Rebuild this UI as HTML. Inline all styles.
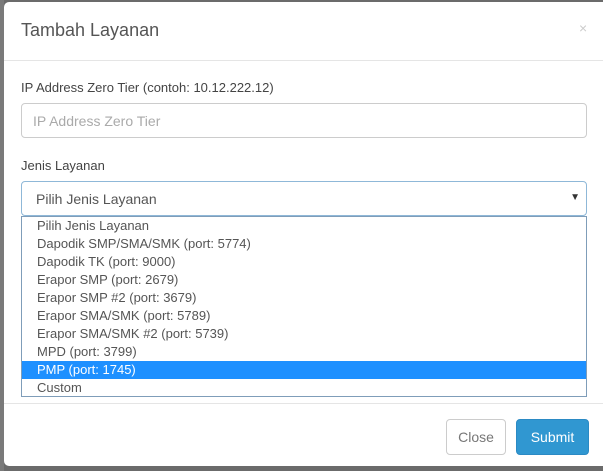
<!DOCTYPE html>
<html><head><style>
body{margin:0;width:603px;height:471px;background:#6b6b6b;position:relative;overflow:hidden;font-family:"Liberation Sans",sans-serif;color:#555}
.bg{position:absolute;left:0;top:0;width:4px;height:471px;background:#7a7a7a}
.modal{position:absolute;left:4px;top:2px;width:605px;height:464px;background:#fff;border-radius:5px}
.title{position:absolute;left:17px;top:18px;font-size:18px;color:#555}
.x{position:absolute;left:575px;top:18px;font-size:14px;color:#ccc}
.hr{position:absolute;left:0;width:605px;height:1px;background:#e5e5e5}
.lbl{position:absolute;left:17px;font-size:13px;color:#444}
.inp{position:absolute;left:17px;width:564px;height:33px;border:1px solid #ccc;border-radius:4px;box-sizing:content-box}
.list{position:absolute;left:17px;top:214px;width:564px;height:179px;border:1px solid #7f9db9;background:#fff}
.list div{height:18px;line-height:18px;padding-left:15px;font-size:13px;color:#555}
.list .sel{background:#1e90ff;color:#fff}
.btn{position:absolute;top:417px;height:34px;border-radius:4px;font-size:14px;line-height:34px;text-align:center}
</style></head><body>
<div class="bg"></div>
<div class="modal">
<div class="title">Tambah Layanan</div>
<div class="x">×</div>
<div class="hr" style="top:58px"></div>
<div class="lbl" style="top:78px">IP Address Zero Tier (contoh: 10.12.222.12)</div>
<div class="inp" style="top:101px"><span style="position:absolute;left:11px;top:9px;font-size:14px;color:#aaa">IP Address Zero Tier</span></div>
<div class="lbl" style="top:156px">Jenis Layanan</div>
<div class="inp" style="top:179px;border-color:#8fb8d8"><span style="position:absolute;left:14px;top:9px;font-size:14px;color:#555">Pilih Jenis Layanan</span><span style="position:absolute;right:6px;top:10px;font-size:10px;color:#333">▼</span></div>
<div class="list">
<div>Pilih Jenis Layanan</div>
<div>Dapodik SMP/SMA/SMK (port: 5774)</div>
<div>Dapodik TK (port: 9000)</div>
<div>Erapor SMP (port: 2679)</div>
<div>Erapor SMP #2 (port: 3679)</div>
<div>Erapor SMA/SMK (port: 5789)</div>
<div>Erapor SMA/SMK #2 (port: 5739)</div>
<div>MPD (port: 3799)</div>
<div class="sel">PMP (port: 1745)</div>
<div>Custom</div>
</div>
<div class="hr" style="top:401px"></div>
<div class="btn" style="left:442px;width:58px;border:1px solid #ccc;color:#777">Close</div>
<div class="btn" style="left:512px;width:71px;border:1px solid #2b8ac4;background:#3097d1;color:#fff">Submit</div>
</div>
</body></html>
